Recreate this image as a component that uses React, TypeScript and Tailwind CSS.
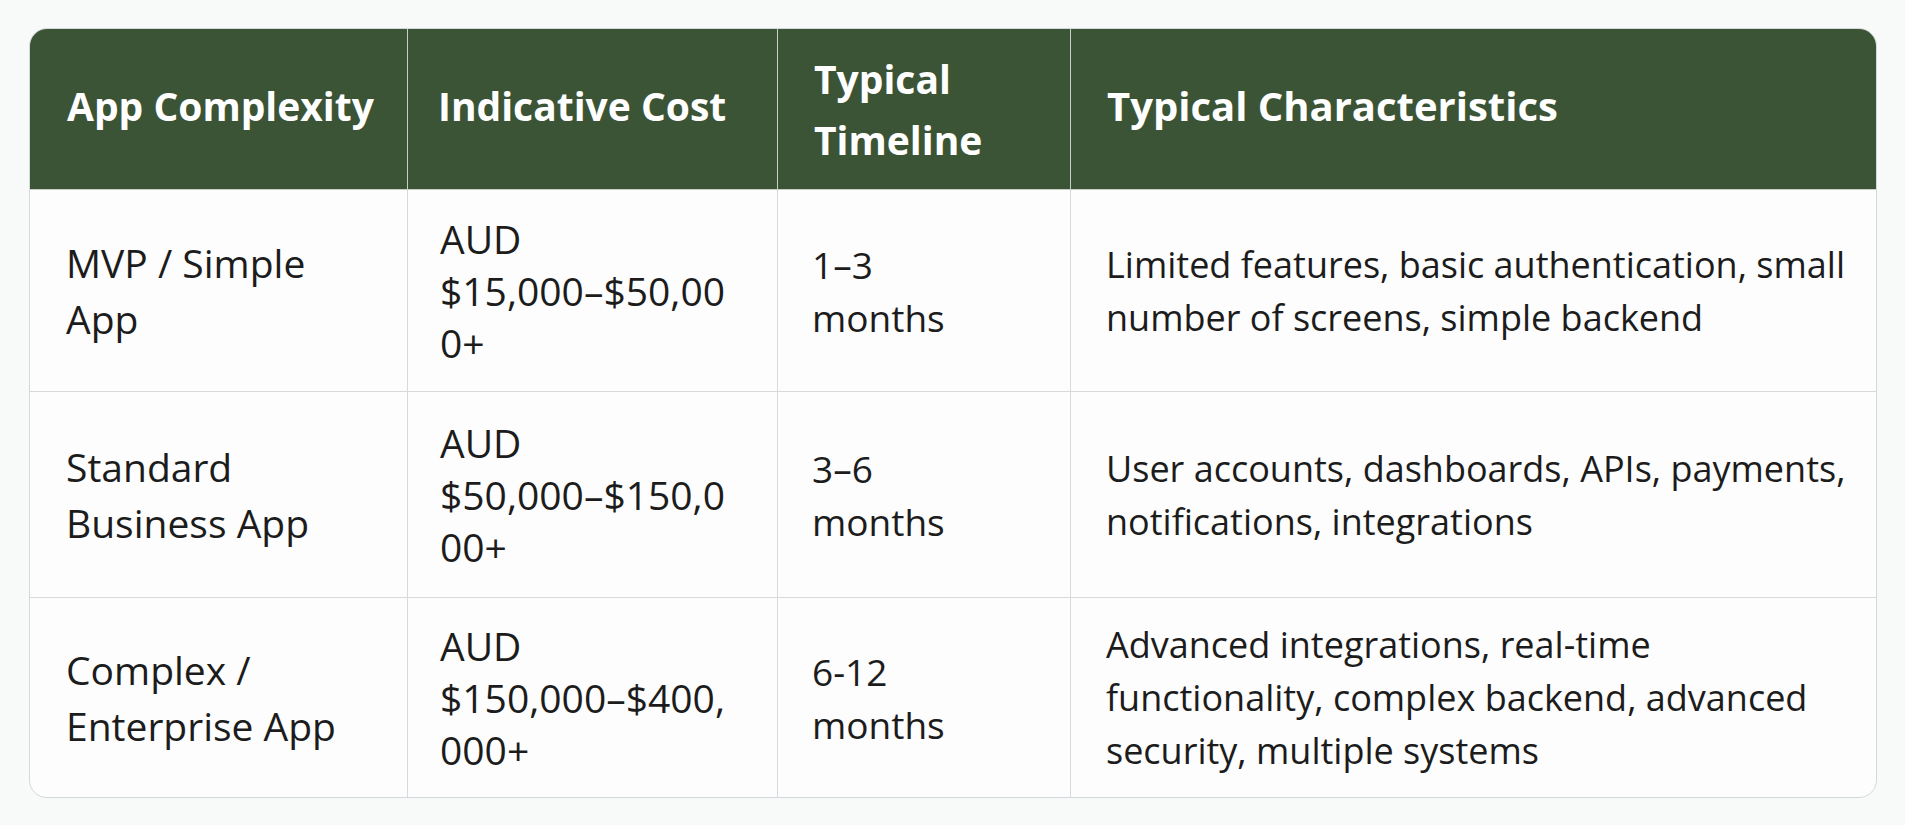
import React from "react"

type Row = {
  complexity: string[]
  cost: string[]
  timeline: string[]
  traits: string[]
  height: string
}

const rows: Row[] = [
  {
    complexity: ["MVP / Simple", "App"],
    cost: ["AUD", "$15,000–$50,00", "0+"],
    timeline: ["1–3", "months"],
    traits: ["Limited features, basic authentication, small", "number of screens, simple backend"],
    height: "h-[202px]",
  },
  {
    complexity: ["Standard", "Business App"],
    cost: ["AUD", "$50,000–$150,0", "00+"],
    timeline: ["3–6", "months"],
    traits: ["User accounts, dashboards, APIs, payments,", "notifications, integrations"],
    height: "h-[206px]",
  },
  {
    complexity: ["Complex /", "Enterprise App"],
    cost: ["AUD", "$150,000–$400,", "000+"],
    timeline: ["6-12", "months"],
    traits: ["Advanced integrations, real-time", "functionality, complex backend, advanced", "security, multiple systems"],
    height: "h-[199px]",
  },
]

const Lines = ({ lines }: { lines: string[] }) => (
  <div>
    {lines.map((l) => (
      <div key={l} className="whitespace-nowrap">
        {l}
      </div>
    ))}
  </div>
)

export default function App() {
  return (
    <div
      className="min-h-screen w-full bg-[#f8f9f9] pt-[28px] pl-[29px]"
      style={{ fontFamily: '"Open Sans", "Noto Sans", sans-serif' }}
    >
      <div className="w-[1848px] rounded-[18px] border border-[#d4d7db] overflow-hidden bg-[#fdfdfd]">
        <div className="grid grid-cols-[378px_370px_293px_805px]">
          {/* Header */}
          <div className="h-[161px] bg-[#3c5436] border-r border-b border-[#c9cdc7] flex items-center pl-[37px] pb-[8px] text-white font-bold text-[39px] leading-[61px]">
            App Complexity
          </div>
          <div className="h-[161px] bg-[#3c5436] border-r border-b border-[#c9cdc7] flex items-center pl-[30px] pb-[8px] text-white font-bold text-[39px] leading-[61px]">
            Indicative Cost
          </div>
          <div className="h-[161px] bg-[#3c5436] border-r border-b border-[#c9cdc7] flex items-center pl-[36px] text-white font-bold text-[39px] leading-[61px]">
            <Lines lines={["Typical", "Timeline"]} />
          </div>
          <div className="h-[161px] bg-[#3c5436] border-b border-[#c9cdc7] flex items-center pl-[36px] pb-[8px] text-white font-bold text-[40px] leading-[61px]">
            Typical Characteristics
          </div>

          {/* Body */}
          {rows.map((r, i) => {
            const last = i === rows.length - 1
            const rowBorder = last ? "" : "border-b"
            return (
              <React.Fragment key={i}>
                <div
                  className={`${r.height} ${rowBorder} border-r border-[#d7dadd] flex items-center pl-[36px] text-[#1c1c1c] text-[39px] leading-[56px]`}
                >
                  <Lines lines={r.complexity} />
                </div>
                <div
                  className={`${r.height} ${rowBorder} border-r border-[#d7dadd] flex items-center pl-[32px] text-[#1c1c1c] text-[39px] leading-[52px]`}
                >
                  <Lines lines={r.cost} />
                </div>
                <div
                  className={`${r.height} ${rowBorder} border-r border-[#d7dadd] flex items-center pl-[34px] text-[#1c1c1c] text-[37px] leading-[53px]`}
                >
                  <Lines lines={r.timeline} />
                </div>
                <div
                  className={`${r.height} ${rowBorder} border-[#d7dadd] flex items-center pl-[35px] text-[#1c1c1c] text-[36px] leading-[53px]`}
                >
                  <Lines lines={r.traits} />
                </div>
              </React.Fragment>
            )
          })}
        </div>
      </div>
    </div>
  )
}
